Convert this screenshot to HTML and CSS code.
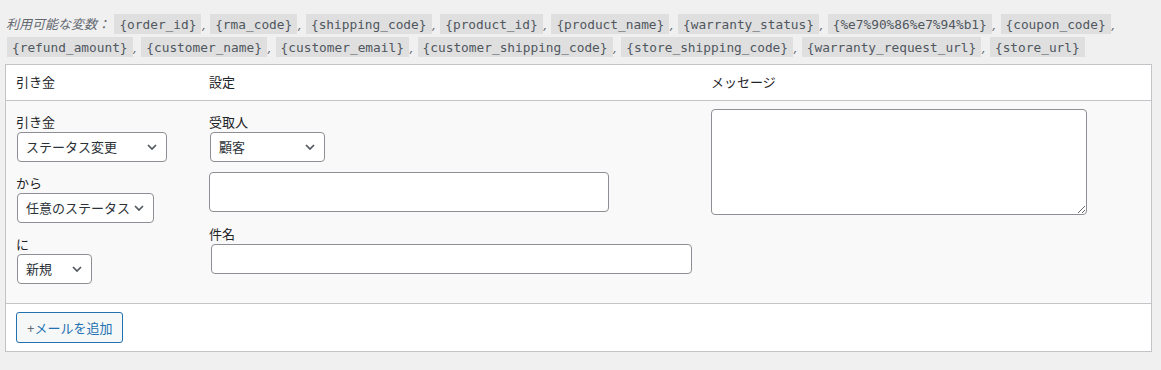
FILE: index.html
```html
<!DOCTYPE html>
<html lang="ja">
<head>
    <meta charset="UTF-8">
    <meta name="viewport" content="width=device-width, initial-scale=1.0">
    <title>メール設定</title>
    <link rel="stylesheet" href="styles.css">
</head>
<body>
<div class="wrap">
    <p class="description">利用可能な変数： <code>{order_id}</code>, <code>{rma_code}</code>, <code>{shipping_code}</code>, <code>{product_id}</code>, <code>{product_name}</code>, <code>{warranty_status}</code>, <code>{%e7%90%86%e7%94%b1}</code>, <code>{coupon_code}</code>, <code>{refund_amount}</code>, <code>{customer_name}</code>, <code>{customer_email}</code>, <code>{customer_shipping_code}</code>, <code>{store_shipping_code}</code>, <code>{warranty_request_url}</code>, <code>{store_url}</code></p>

    <div class="email-table">
        <div class="row head">
            <div class="cell">引き金</div>
            <div class="cell">設定</div>
            <div class="cell">メッセージ</div>
        </div>

        <div class="row body">
            <div class="cell trigger-col">
                <div class="field">
                    <label>引き金</label>
                    <span class="select-wrap">
                        <select class="sel-trigger"><option>ステータス変更</option></select>
                        <svg class="chev" width="10" height="6" viewBox="0 0 10 6"><polyline points="1,1 5,5 9,1" fill="none" stroke="#50575e" stroke-width="1.7"/></svg>
                    </span>
                </div>
                <div class="field">
                    <label>から</label>
                    <span class="select-wrap">
                        <select class="sel-from"><option>任意のステータス</option></select>
                        <svg class="chev" width="10" height="6" viewBox="0 0 10 6"><polyline points="1,1 5,5 9,1" fill="none" stroke="#50575e" stroke-width="1.7"/></svg>
                    </span>
                </div>
                <div class="field">
                    <label>に</label>
                    <span class="select-wrap">
                        <select class="sel-to"><option>新規</option></select>
                        <svg class="chev" width="10" height="6" viewBox="0 0 10 6"><polyline points="1,1 5,5 9,1" fill="none" stroke="#50575e" stroke-width="1.7"/></svg>
                    </span>
                </div>
            </div>

            <div class="cell settings-col">
                <div class="field">
                    <label>受取人</label>
                    <span class="select-wrap">
                        <select class="sel-recipient"><option>顧客</option></select>
                        <svg class="chev" width="10" height="6" viewBox="0 0 10 6"><polyline points="1,1 5,5 9,1" fill="none" stroke="#50575e" stroke-width="1.7"/></svg>
                    </span>
                </div>
                <div class="field">
                    <input type="text" class="input-admin">
                </div>
                <div class="field subject">
                    <label>件名</label>
                    <input type="text" class="input-subject">
                </div>
            </div>

            <div class="cell message-col">
                <textarea class="message"></textarea>
            </div>
        </div>

        <div class="foot">
            <button class="button"><span class="plus">+</span>メールを追加</button>
        </div>
    </div>
</div>
</body>
</html>
```

FILE: styles.css
```css
body {
    margin: 0;
    background-color: #f0f0f1;
    font-family: "Noto Sans", "Noto Sans CJK JP", sans-serif;
    font-size: 13px;
    color: #3c434a;
}
.wrap {
    padding: 13px 9px 0 5px;
}
.description {
    margin: 0 0 5px;
    padding-left: 1px;
    line-height: 23px;
    font-style: italic;
    color: #646970;
}
.description code {
    font-family: "DejaVu Sans Mono", monospace;
    font-style: normal;
    font-size: 12.8px;
    color: #50575e;
    padding: 3px 5px 2px;
    margin: 0 1px;
    background: rgba(0, 0, 0, 0.07);
}
.email-table {
    border: 1px solid #c3c4c7;
    background-color: #fff;
}
.row {
    display: grid;
    grid-template-columns: 193px 502px 1fr;
}
.head {
    border-bottom: 1px solid #c3c4c7;
}
.head .cell {
    padding: 8px 10px;
    line-height: 19px;
    color: #1d2327;
}
.body {
    background-color: #f9f9f9;
    border-bottom: 1px solid #c3c4c7;
}
.body .cell {
    padding: 8px 10px;
}
.trigger-col {
    display: flex;
    flex-direction: column;
    gap: 11px;
}
.body .trigger-col,
.body .settings-col {
    padding-top: 11px;
    padding-bottom: 19px;
}
.field label {
    display: block;
    line-height: 20px;
    color: #1d2327;
}
.settings-col .field + .field {
    margin-top: 10px;
}
.settings-col .field.subject {
    margin-top: 12px;
}
.select-wrap {
    position: relative;
    display: inline-block;
    margin: 0 1px;
}
select {
    -webkit-appearance: none;
    appearance: none;
    display: block;
    height: 30px;
    padding: 0 24px 0 8px;
    border: 1px solid #8c8f94;
    border-radius: 4px;
    background: #fff;
    font-family: inherit;
    font-size: 13px;
    color: #2c3338;
}
.chev {
    position: absolute;
    right: 10px;
    top: 12px;
    pointer-events: none;
}
.sel-trigger { width: 150px; }
.sel-from { width: 137px; }
.sel-to { width: 75px; }
.sel-recipient { width: 115px; }
input[type="text"],
textarea {
    display: block;
    box-sizing: border-box;
    border: 1px solid #8c8f94;
    border-radius: 4px;
    background: #fff;
    font-family: inherit;
    font-size: 13px;
    color: #2c3338;
}
.input-admin {
    width: 400px;
    height: 40px;
}
.input-subject {
    width: 481px;
    height: 30px;
    margin-left: 2px;
}
.message {
    width: 376px;
    height: 106px;
    margin: 0;
}
.foot {
    padding: 8px 10px;
}
.button {
    height: 31px;
    padding: 0 10px;
    border: 1px solid #2271b1;
    border-radius: 3px;
    background: #f6f7f7;
    color: #2271b1;
    font-family: inherit;
    font-size: 13px;
    cursor: pointer;
}
.button .plus {
    color: #646970;
}
```
